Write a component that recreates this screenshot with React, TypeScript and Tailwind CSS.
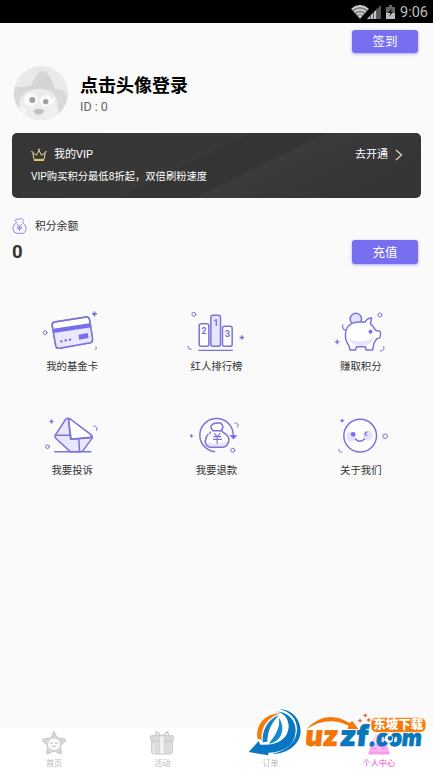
import React from 'react';

const PURPLE = '#7b74d8';

const CardIcon = () => (
  <svg viewBox="-8.5 0 240 150" className="h-[50px] w-20" fill="none" stroke={PURPLE} strokeWidth="4.500" strokeLinejoin="round" strokeLinecap="round">
    <path d="M59 66 154 51Q162 50 164 58L173 117Q174 126 166 128L74 145Q65 146 63 138L52 76Q51 68 59 66Z" fill="#fff" />
    <path d="M57 98 170 80 173 119Q173 127 166 128L74 145Q65 146 63 138Z" fill="#eae8ff" stroke="none" />
    <path d="M55 86 168 69 170 82 57 99Z" fill="#776ff0" stroke="none" />
    <path d="M59 66 154 51Q162 50 164 58L173 117Q174 126 166 128L74 145Q65 146 63 138L52 76Q51 68 59 66Z" />
    <path d="M131 104 159 99 161 114 133 119Z" fill="#776ff0" stroke="none" />
    <path d="M79 124h1M92 121h1M105 119h1" strokeWidth="7" />
    <path d="M179 36v11M173.500 41.500h11" strokeWidth="5" />
    <circle cx="31" cy="98" r="5.500" strokeWidth="3" />
    <path d="M183 141q6 8-5 10" strokeWidth="3" />
  </svg>
);

const RankIcon = () => (
  <svg viewBox="-10.5 0 240 153" className="h-[51px] w-20" fill="none" stroke={PURPLE} strokeWidth="4.500" strokeLinecap="round">
    <rect x="59" y="71" width="29" height="68" rx="6" fill="#fff" />
    <rect x="94" y="46" width="29" height="93" rx="6" fill="#e8e6ff" />
    <rect x="129" y="79" width="29" height="60" rx="6" fill="#fff" />
    <path d="M58 151H159" strokeWidth="4" />
    <g fill={PURPLE} stroke="none" fontFamily="Roboto, sans-serif" fontWeight="700" fontSize="28" textAnchor="middle">
      <text x="73.500" y="103">2</text>
      <text x="109" y="79">1</text>
      <text x="144" y="111">3</text>
    </g>
    <circle cx="43" cy="43" r="6" strokeWidth="3" />
    <path d="M187 107v11M181.500 112.500h11" strokeWidth="4" />
    <path d="M25 139q0 9 10 9" strokeWidth="3" />
  </svg>
);

const PigIcon = () => (
  <svg viewBox="-12.5 0 240 155" className="h-[51.7px] w-20" fill="none" stroke={PURPLE} strokeWidth="4.500" strokeLinejoin="round" strokeLinecap="round">
    <circle cx="92" cy="57" r="17" fill="#e4e1ff" />
    <path d="M81 70Q97 64 119 67 126 54 139 54L136 72Q147 79 151 91L164 94Q167 96 166 102L165 111Q163 116 155 116L146 130 143 148Q142 151 136 150L123 150 121 140H94L91 150H75L71 136Q59 121 61 101 62 79 81 70Z" fill="#fff" />
    <path d="M69 113Q81 124 103 124 127 124 148 112 139 137 107 138 78 137 69 113Z" fill="#e6e4ff" stroke="none" />
    <path d="M53 75q-4 11 8 16" strokeWidth="3.500" />
    <circle cx="136" cy="95" r="6" fill="#776ff0" stroke="none" />
    <circle cx="164" cy="45" r="6" strokeWidth="3" />
    <path d="M36 120v11M30.500 125.500h11" strokeWidth="4" />
    <path d="M176 139q3 14-11 14" strokeWidth="3" />
  </svg>
);

const ComplaintIcon = () => (
  <svg viewBox="-8.5 0 240 150" className="h-[50px] w-20" fill="none" stroke={PURPLE} strokeWidth="4.500" strokeLinejoin="round" strokeLinecap="round">
    <path d="M93 45Q99 41 106 45L169 93Q175 98 171 104L145 139Q142 143 136 143H106L62 102Q58 97 63 91Z" fill="#e9e7ff" />
    <path d="M101 45Q104 43 110 48L168 92Q172 97 168 101L109 106Z" fill="#fff" />
    <path d="M101 48 107 106 168 100M62 94 105 93M132 106 134 141" />
    <path d="M60 143H168" strokeWidth="4.500" />
    <circle cx="38" cy="128" r="5.500" strokeWidth="3" />
    <path d="M50 48v9M45.500 52.500h9" strokeWidth="4" />
    <path d="M177 66q12 0 9 14" strokeWidth="3" />
  </svg>
);

const RefundIcon = () => (
  <svg viewBox="-10.5 0 240 150" className="h-[50px] w-20" fill="none" stroke={PURPLE} strokeWidth="4.500" strokeLinejoin="round" strokeLinecap="round">
    <path d="M105 143A50 50 0 1 1 161 96" />
    <path d="M153 95 162 105 170 96Z" fill="#776ff0" stroke="#776ff0" strokeWidth="3" />
    <path d="M101 80Q89 69 98 62 107 54 113 58 121 53 128 62 134 70 124 80 129 84 139 91 149 97 148 110 145 129 128 130H94Q79 128 77 112 79 95 91 88Z" fill="#fff" stroke="none" />
    <path d="M83 113Q111 126 144 110 142 127 127 128H96Q84 126 83 113Z" fill="#e6e4ff" stroke="none" />
    <path d="M101 80Q89 69 98 62 107 54 113 58 121 53 128 62 134 70 124 80 129 84 139 91 149 97 148 110 145 129 128 130H94Q79 128 77 112 79 98 86 91" />
    <path d="M91 87 93 85M102 80H124" />
    <path d="M105 89 113 98 122 89M103 98H124M102 106H126M113 98V118" strokeWidth="3.500" />
    <circle cx="160" cy="139" r="6" strokeWidth="3" />
    <path d="M36 92v7M32.500 95.500h7" strokeWidth="4" />
    <path d="M166 57q14-1 9 12" strokeWidth="3" />
  </svg>
);

const AboutIcon = () => (
  <svg viewBox="-12.5 0 240 150" className="h-[50px] w-20" fill="none" stroke={PURPLE} strokeWidth="4.500" strokeLinejoin="round" strokeLinecap="round">
    <circle cx="105" cy="95" r="49" fill="#fff" />
    <circle cx="78" cy="98" r="15" fill="#e5e2ff" stroke="none" />
    <circle cx="128" cy="95" r="15" fill="#e5e2ff" stroke="none" />
    <circle cx="84" cy="91" r="7" fill="#776ff0" stroke="none" />
    <path d="M125 84 119 90 124 95" strokeWidth="4" />
    <path d="M91 105Q103 119 118 105" />
    <circle cx="180" cy="97" r="7" strokeWidth="3" />
    <path d="M51 46v8M47 50h8" strokeWidth="4" />
    <path d="M41 136q0 10 9 8" strokeWidth="3" />
  </svg>
);

const row1 = [
  { label: '我的基金卡', icon: <CardIcon /> },
  { label: '红人排行榜', icon: <RankIcon /> },
  { label: '赚取积分', icon: <PigIcon /> },
];

const row2 = [
  { label: '我要投诉', icon: <ComplaintIcon /> },
  { label: '我要退款', icon: <RefundIcon /> },
  { label: '关于我们', icon: <AboutIcon /> },
];

const MenuRow: React.FC<{ items: typeof row1 }> = ({ items }) => (
  <div className="grid h-[104px] grid-cols-3">
    {items.map((item) => (
      <button key={item.label} className="flex flex-col items-center">
        <span className="block h-[59px]">{item.icon}</span>
        <span className="text-[10.4px] leading-4 text-[#333]">{item.label}</span>
      </button>
    ))}
  </div>
);

const StatusBar = () => (
  <div className="flex h-[23px] items-center justify-end bg-black pr-[5px] text-[#bdbdbd]">
    <svg viewBox="0 0 46 16" className="mr-[3px] h-4 w-[46px]">
      <path d="M0 5Q9-2 18 5L9 15Z" fill="#777" />
      <g fill="none" stroke="#d0d0d0" strokeWidth="1.900">
        <path d="M1 5.200Q9-1 17 5.200M3.300 7.900Q9 3.500 14.700 7.900M5.700 10.500Q9 7.800 12.300 10.500" />
      </g>
      <path d="M7 12 9 11 11 12 9 14.500Z" fill="#d0d0d0" />
      <path d="M16 15 30 1V15Z" fill="#555" />
      <path d="M16 15 26 5V15Z" fill="#c4c4c4" />
      <path d="M19.500 10V15M22.500 7V15M25.500 4V15" stroke="#333" strokeWidth=".7" />
      <path d="M35 3H38V1H41V3H44V15H35Z" fill="#666" />
      <path d="M35 9H44V15H35Z" fill="#bdbdbd" />
      <path d="M41 4 37 9H39.500L38 13 42 8H40Z" fill="#111" />
    </svg>
    <span className="pt-[2px] text-[14.5px] leading-5">9:06</span>
  </div>
);

const Avatar = () => (
  <svg viewBox="0 0 162 162" className="size-[54px] shrink-0 rounded-full">
    <defs>
      <linearGradient id="hat" x1="0" y1="0" x2="1" y2="1">
        <stop offset="0" stopColor="#e0e0e0" />
        <stop offset=".5" stopColor="#d2d2d2" />
        <stop offset="1" stopColor="#e2e2e2" />
      </linearGradient>
    </defs>
    <rect width="162" height="162" fill="#e9e9e9" />
    <path d="M0 62Q25 66 52 58 64 20 84 14 106 12 121 67 152 72 162 87V120H0Z" fill="url(#hat)" />
    <path d="M0 95Q17 73 40 76 80 58 122 79 162 85 162 111V162H0Z" fill="#d9d9d9" />
    <path d="M16 105Q30 69 76 69 117 69 128 100 140 133 112 162H40Q14 139 16 105Z" fill="#ececec" />
    <circle cx="50" cy="101" r="20" fill="#fafafa" />
    <circle cx="97" cy="105" r="18" fill="#fafafa" />
    <circle cx="55" cy="102" r="9" fill="#a0a0a0" />
    <circle cx="95" cy="107" r="8" fill="#a0a0a0" />
    <path d="M58 134Q71 123 91 133 88 146 73 146 60 144 58 134Z" fill="#c0c0c0" />
    <circle cx="112" cy="138" r="23" fill="#efefef" />
    <circle cx="24" cy="137" r="15" fill="#f4f4f4" />
    <path d="M116 98 122 92 121 108 109 116Z" fill="#fff" />
  </svg>
);

const StarIcon = () => (
  <svg viewBox="0 0 78 76" className="h-[25px] w-[26px]" strokeLinejoin="round" strokeLinecap="round">
    <path d="M39 4 49 24 73 28Q77 30 73 34L58 49 62 69Q62 74 57 72L39 64 21 72Q16 74 16 69L20 49 5 34Q1 30 5 28L29 24Z" fill="#d6d6d6" stroke="#c6c6c6" strokeWidth="3" />
    <circle cx="39" cy="43" r="18" fill="#fafafa" />
    <path d="M29 40h6M43 40h6M33 49q6 5 12 0" fill="none" stroke="#bdbdbd" strokeWidth="3" />
  </svg>
);

const GiftIcon = () => (
  <svg viewBox="0 0 78 76" className="h-[25px] w-[26px]" strokeLinejoin="round">
    <path d="M37 18 22 5 19 16M41 18 56 5 59 16" fill="none" stroke="#c8c8c8" strokeWidth="4" />
    <rect x="7" y="33" width="64" height="40" rx="6" fill="#dcdcdc" stroke="#c4c4c4" strokeWidth="2.500" />
    <rect x="4" y="17" width="70" height="17" rx="4" fill="#dadada" stroke="#c4c4c4" strokeWidth="2.500" />
    <path d="M32 18H46V73H32Z" fill="#f3f3f3" stroke="#cacaca" strokeWidth="2" />
    <path d="M13 40v25q0 3 5 4" fill="none" stroke="#fff" strokeWidth="2" />
  </svg>
);

const OrderIcon = () => (
  <svg viewBox="0 0 78 76" className="h-[25px] w-[26px]">
    <path d="M18 68q7-7 14-2l-4 7H18Z" fill="#e5e5e5" />
  </svg>
);

const ProfileIcon = () => (
  <svg viewBox="0 0 78 76" className="h-[25px] w-[26px]">
    <circle cx="39" cy="29" r="19" fill="#ffdaf4" />
    <path d="M12 47Q39 38 66 47L70 68Q70 74 64 74H13Q7 74 8 68Z" fill="#ffb5ef" />
    <path d="M7 66H71V74H7Z" fill="#f99ae6" />
    <path d="M15 60Q24 50 31 60M47 58q8-7 15 2" fill="none" stroke="#ee78d8" strokeWidth="3" />
  </svg>
);

const tabs = [
  { label: '首页', icon: <StarIcon />, active: false },
  { label: '活动', icon: <GiftIcon />, active: false },
  { label: '订单', icon: <OrderIcon />, active: false },
  { label: '个人中心', icon: <ProfileIcon />, active: true },
];

const SiteBadge = () => (
  <svg viewBox="742 36 540 150" className="absolute bottom-[14px] left-[247px] h-[50px] w-[180px]">
    {/* swoosh */}
    <path d="M812 46C872 34 905 68 903 111 900 151 865 176 806 174L806 181 747 171 777 138 782 149C774 90 775 60 812 46Z" fill="#fff" stroke="#fff" strokeWidth="6" />
    <path d="M774 132C766 90 795 56 843 54 810 66 783 90 786 134Z" fill="#f47c0b" />
    <path d="M789 142C786 104 806 72 838 60 817 82 803 108 803 140Z" fill="#1680c6" />
    <path d="M816 50C850 46 868 70 867 96 865 130 835 153 782 149L777 138 747 171 806 181 806 173C862 172 888 142 888 104 886 70 860 46 816 50Z" fill="#0876c2" />
    <path d="M838 42C882 44 903 76 903 110 901 148 864 176 818 177 866 166 892 136 892 102 891 70 872 50 838 42Z" fill="#0876c2" />
    <path d="M808 146C822 124 842 106 838 68 858 98 848 140 808 146Z" fill="#168bd1" />
    <path d="M918 104Q978 39 1051 85L1057 77 1077 103 1043 102 1047 92Q983 60 918 104Z" fill="#f47909" />
    <g transform="translate(16.300 0) skewX(-6)" fontFamily="Inter, sans-serif" fontWeight="900" strokeLinejoin="round">
      <text x="914" y="153" fontSize="86" textLength="100" lengthAdjust="spacingAndGlyphs" fill="#f47507" stroke="#f47507" strokeWidth="2">uz</text>
      <text x="1017" y="153" fontSize="86" textLength="86" lengthAdjust="spacingAndGlyphs" fill="#0876bb" stroke="#0876bb" strokeWidth="2">zf</text>
      <text x="1104" y="153" fontSize="70" textLength="160" lengthAdjust="spacingAndGlyphs" fill="#0876bb" stroke="#0876bb" strokeWidth="2">.com</text>
    </g>
    <circle cx="1168" cy="131" r="12" fill="#fff" />
    <circle cx="1171" cy="130" r="7" fill="#0876bb" />
    <rect x="1115" y="69" width="162" height="42" rx="15" fill="#f47909" stroke="#f9a54e" strokeWidth="2" />
    <text x="1121" y="103" fontSize="36" textLength="150" lengthAdjust="spacingAndGlyphs" fontWeight="900" fill="#fff" fontFamily="'Noto Sans CJK SC', sans-serif">东坡下载</text>
    <path d="M1097 54 1100 59 1105 61 1100 63 1097 68 1094 63 1089 61 1094 59ZM1081 70 1084 75 1089 77 1084 79 1081 84 1078 79 1073 77 1078 75ZM1107 68 1110 73 1115 75 1110 77 1107 82 1104 77 1099 75 1104 73Z" fill="#f26a2c" />
  </svg>
);

export default function App() {
  return (
    <div className="relative flex h-[771px] w-[433px] flex-col overflow-hidden bg-[#fafafa] font-[Roboto,'Noto_Sans_CJK_SC',sans-serif]">
      <StatusBar />

      <div className="flex justify-end pt-[7px] pr-[15px]">
        <button className="h-[23px] w-[66px] rounded-[3px] bg-[#776ff0] text-[12.5px] leading-[22px] text-white shadow-[0_1px_3px_#aaa4ff]">
          签到
        </button>
      </div>

      {/* User */}
      <div className="mt-[13px] flex h-[54px] items-center pl-[14px]">
        <Avatar />
        <div className="ml-3 pt-[3px]">
          <h1 className="text-[18px] leading-6 font-bold text-black">点击头像登录</h1>
          <p className="text-[12.5px] leading-[18px] text-[#666]">ID : 0</p>
        </div>
      </div>

      {/* VIP card */}
      <section className="mt-[13px] ml-3 h-[65px] w-[409px] rounded-[5px] bg-[linear-gradient(154deg,#353535_0%,#383838_44%,#343434_44.3%,#343434_58%,#3b3b3b_58.3%,#353535_85%)] pt-[13px] pr-[18px] pl-[19px] text-white">
        <div className="flex h-[18px] items-center text-[11px]">
          <svg viewBox="0 0 48 42" className="mb-px h-[14px] w-4" fill="none" stroke="#e8d599" strokeWidth="3" strokeLinejoin="round">
            <path d="M5 13 16 22 24 8 32 22 43 13 39 34H9Z" />
            <path d="M9 37H39" stroke="#ebc84e" strokeWidth="4" />
            <circle cx="24" cy="5" r="2" /><circle cx="3" cy="11" r="1" /><circle cx="45" cy="11" r="1" />
          </svg>
          <span className="ml-[7px]">我的VIP</span>
          <span className="ml-auto">去开通</span>
          <svg viewBox="0 0 8 12" className="mb-px ml-[7px] h-3 w-2" fill="none" stroke="#e3d9b7" strokeWidth="1.200">
            <path d="M1 1 6.500 6 1 11" />
          </svg>
        </div>
        <p className="mt-[3.5px] text-[10.3px] leading-[18px]">VIP购买积分最低8折起，双倍刷粉速度</p>
      </section>

      {/* Balance */}
      <section className="mt-[18px] h-[50px] pr-[15px] pl-3">
        <div className="flex h-[19px] items-center text-[10.8px] text-[#333]">
          <svg viewBox="0 0 44 48" className="mr-[8px] h-4 w-[15px]" fill="none" stroke="#8d85f3" strokeWidth="3">
            <path d="M14 14Q5 8 13 3L20 4 25 1 31 4Q38 6 31 14 42 20 42 31 41 46 29 46H14Q2 44 2 31 3 18 14 14Z" />
            <path d="M15 18 22 26 29 18M14 27H30M14 32H30M22 26V39" />
          </svg>
          <span className="pt-[3px]">积分余额</span>
        </div>
        <div className="mt-[5px] flex h-[24px] items-center justify-between">
          <span className="pt-px text-[18.5px] font-bold text-[#333]">0</span>
          <button className="h-6 w-[66px] rounded-[3px] bg-[#776ff0] text-[12.5px] leading-[23px] text-white shadow-[0_1px_3px_#aaa4ff]">
            充值
          </button>
        </div>
      </section>

      <main className="pt-[34px]">
        <MenuRow items={row1} />
        <MenuRow items={row2} />
      </main>

      <nav className="mt-auto grid h-11 grid-cols-4 bg-white pt-[3px]">
        {tabs.map((tab) => (
          <div key={tab.label} className="flex flex-col items-center">
            {tab.icon}
            <span className={tab.active ? 'mt-[2px] text-[8.2px] leading-3 text-[#ee45d0]' : 'mt-[2px] text-[8.2px] leading-3 text-[#bbb]'}>
              {tab.label}
            </span>
          </div>
        ))}
      </nav>

      <SiteBadge />
    </div>
  );
}
